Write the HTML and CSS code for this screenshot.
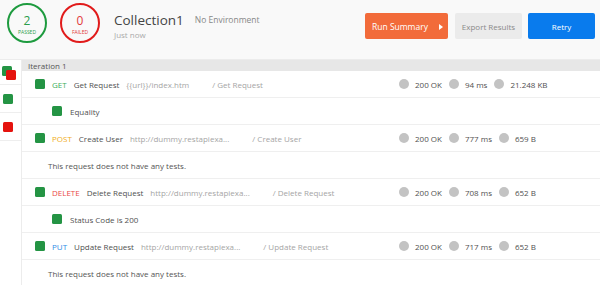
FILE: index.html
```html
<!DOCTYPE html>
<html lang="en">
<head>
    <meta charset="UTF-8">
    <title>Collection Runner - Collection1</title>
    <link rel="stylesheet" href="styles.css">
</head>
<body>

    <header class="run-header">
        <div class="counter passed">
            <span class="count">2</span>
            <span class="count-label">PASSED</span>
        </div>
        <div class="counter failed">
            <span class="count">0</span>
            <span class="count-label">FAILED</span>
        </div>
        <div class="run-title">
            <div class="title-line">
                <h1>Collection1</h1>
                <span class="env">No Environment</span>
            </div>
            <span class="when">Just now</span>
        </div>
        <div class="actions">
            <button class="btn btn-summary">Run Summary <span class="caret"></span></button>
            <button class="btn btn-export">Export Results</button>
            <button class="btn btn-retry">Retry</button>
        </div>
    </header>

    <div class="run-body">
        <!-- mini map on the left -->
        <aside class="sidebar">
            <div class="side-item">
                <span class="stack">
                    <span class="sq sq-pass"></span>
                    <span class="sq sq-fail sq-over"></span>
                </span>
            </div>
            <div class="side-item"><span class="sq sq-pass"></span></div>
            <div class="side-item"><span class="sq sq-fail"></span></div>
        </aside>

        <main class="results">
            <div class="iteration">Iteration 1</div>

            <div class="row request">
                <div class="req-info">
                    <span class="sq sq-pass"></span>
                    <span class="method get">GET</span>
                    <span class="req-name">Get Request</span>
                    <span class="req-url">{{url}}/index.htm</span>
                    <span class="req-path">/ Get Request</span>
                </div>
                <div class="stats">
                    <span class="dot"></span><span>200 OK</span>
                    <span class="dot"></span><span>94 ms</span>
                    <span class="dot"></span><span>21.248 KB</span>
                </div>
            </div>
            <div class="row test"><span class="sq sq-pass"></span>Equality</div>

            <div class="row request">
                <div class="req-info">
                    <span class="sq sq-pass"></span>
                    <span class="method post">POST</span>
                    <span class="req-name">Create User</span>
                    <span class="req-url">http://dummy.restapiexa...</span>
                    <span class="req-path">/ Create User</span>
                </div>
                <div class="stats">
                    <span class="dot"></span><span>200 OK</span>
                    <span class="dot"></span><span>777 ms</span>
                    <span class="dot"></span><span>659 B</span>
                </div>
            </div>
            <div class="row no-tests">This request does not have any tests.</div>

            <div class="row request">
                <div class="req-info">
                    <span class="sq sq-pass"></span>
                    <span class="method delete">DELETE</span>
                    <span class="req-name">Delete Request</span>
                    <span class="req-url">http://dummy.restapiexa...</span>
                    <span class="req-path">/ Delete Request</span>
                </div>
                <div class="stats">
                    <span class="dot"></span><span>200 OK</span>
                    <span class="dot"></span><span>708 ms</span>
                    <span class="dot"></span><span>652 B</span>
                </div>
            </div>
            <div class="row test"><span class="sq sq-pass"></span>Status Code is 200</div>

            <div class="row request">
                <div class="req-info">
                    <span class="sq sq-pass"></span>
                    <span class="method put">PUT</span>
                    <span class="req-name">Update Request</span>
                    <span class="req-url">http://dummy.restapiexa...</span>
                    <span class="req-path">/ Update Request</span>
                </div>
                <div class="stats">
                    <span class="dot"></span><span>200 OK</span>
                    <span class="dot"></span><span>717 ms</span>
                    <span class="dot"></span><span>652 B</span>
                </div>
            </div>
            <div class="row no-tests">This request does not have any tests.</div>
        </main>
    </div>

</body>
</html>
```

FILE: styles.css
```css
body {
    font-family: 'Open Sans', 'Noto Sans', sans-serif;
    background-color: #fff;
    margin: 0;
    padding: 0;
    color: #505050;
    font-size: 8px;
    overflow: hidden;
}

/* header */
.run-header {
    display: flex;
    align-items: flex-start;
    height: 59px;
    background-color: #f9f9f9;
    border-bottom: 1px solid #ececec;
    padding-left: 7px;
}
.counter {
    width: 40px;
    height: 40px;
    box-sizing: border-box;
    border-radius: 50%;
    border: 2px solid;
    margin-top: 3px;
    margin-right: 13px;
    display: flex;
    flex-direction: column;
    align-items: center;
    justify-content: center;
}
.passed {
    border-color: #1e9b3f;
    color: #2a9d4a;
}
.failed {
    border-color: #e11b1b;
    color: #e23a3a;
}
.count {
    font-size: 12px;
    line-height: 12px;
    margin-top: 3px;
}
.count-label {
    font-size: 5px;
    line-height: 6px;
    margin-top: 2px;
}
.run-title {
    margin-left: 1px;
    margin-top: 10px;
}
.title-line {
    display: flex;
    align-items: baseline;
}
h1 {
    margin: 0;
    font-size: 13.5px;
    font-weight: normal;
    color: #444;
    line-height: 20px;
}
.env {
    margin-left: 11px;
    font-size: 8.5px;
    color: #888;
    position: relative;
    top: -2px;
}
.when {
    display: block;
    color: #aaa;
    font-size: 8px;
    margin-top: -1px;
}
.actions {
    margin-left: auto;
    margin-top: 13px;
    margin-right: 5px;
    display: flex;
    gap: 6px;
}
.btn {
    font-family: inherit;
    font-size: 8px;
    height: 26px;
    border: none;
    border-radius: 2px;
    padding: 0;
    width: 67px;
    cursor: pointer;
}
.btn-summary {
    width: 83px;
    margin-right: 1px;
    background-color: #f26b3a;
    color: #fff;
    text-align: left;
    padding-left: 7px;
    font-size: 8.5px;
}
.caret {
    display: inline-block;
    width: 0;
    height: 0;
    border-top: 3px solid transparent;
    border-bottom: 3px solid transparent;
    border-left: 4px solid #fff;
    margin-left: 9px;
    vertical-align: 0;
}
.btn-export {
    background-color: #ebebeb;
    color: #8a8a8a;
}
.btn-retry {
    background-color: #097bed;
    color: #fff;
}

/* body */
.run-body {
    display: flex;
}
.sidebar {
    width: 21px;
    border-right: 1px solid #ececec;
    height: 225px;
}
.side-item {
    height: 27px;
    border-bottom: 1px solid #eeeeee;
    display: flex;
    align-items: center;
    padding-left: 3px;
}
.side-item:first-child {
    align-items: flex-start;
    padding-left: 2px;
    padding-top: 6px;
    box-sizing: border-box;
    height: 25px;
}
.stack {
    position: relative;
    width: 14px;
    height: 14px;
}
.sq-over {
    position: absolute;
    left: 4px;
    top: 4px;
}
.sq {
    display: inline-block;
    width: 9px;
    height: 9px;
    border-radius: 1.5px;
    flex-shrink: 0;
}
.sq-pass {
    background-color: #249444;
}
.sq-fail {
    background-color: #e5130e;
}
.side-item .sq {
    width: 10px;
    height: 10px;
}

.results {
    flex: 1;
}
.iteration {
    background-color: #e7e7e7;
    height: 11px;
    line-height: 11px;
    padding-left: 6px;
    color: #555;
}
.row {
    height: 26px;
    border-bottom: 1px solid #efefef;
    display: flex;
    align-items: center;
    white-space: nowrap;
}
.req-info {
    flex: 1;
    display: flex;
    align-items: center;
    padding-left: 13px;
}
.req-info .sq {
    width: 10px;
    height: 10px;
    margin-right: 7px;
}
.method {
    margin-right: 7px;
}
.get { color: #3cae5b; }
.post { color: #f0ad1c; }
.delete { color: #ea4a47; }
.put { color: #2f8de6; }
.req-name {
    margin-right: 7px;
}
.req-url {
    color: #a5a5a5;
    margin-right: 23px;
}
.req-path {
    color: #a5a5a5;
}
.stats {
    width: 201px;
    display: flex;
    align-items: center;
}
.dot {
    width: 10px;
    height: 10px;
    border-radius: 50%;
    background-color: #c3c3c3;
    margin-right: 6px;
    margin-left: 7px;
}
.dot:first-child {
    margin-left: 0;
}
.test {
    padding-left: 30px;
}
.test .sq {
    width: 10px;
    height: 10px;
    margin-right: 8px;
}
.no-tests {
    padding-left: 26px;
    color: #555;
}
```
